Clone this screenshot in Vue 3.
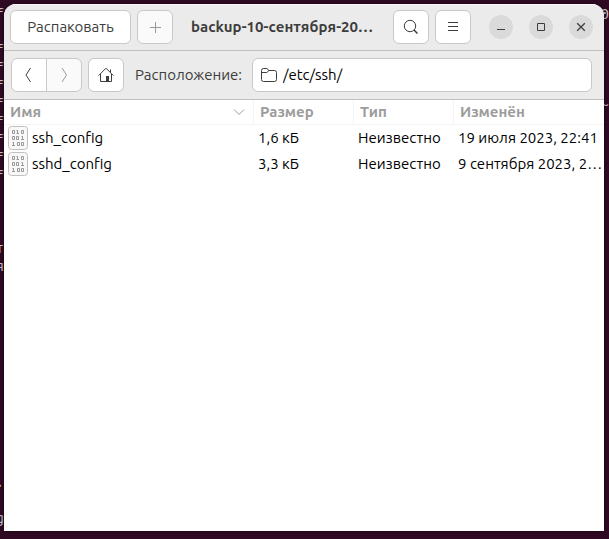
<script setup>
import { ref } from 'vue'

const path = ref('/etc/ssh/')
const files = [
  { name: 'ssh_config', size: '1,6 кБ', type: 'Неизвестно', modified: '19 июля 2023, 22:41' },
  { name: 'sshd_config', size: '3,3 кБ', type: 'Неизвестно', modified: '9 сентября 2023, 22:41' },
]
const leftEdge = ['f', '', 'f', 'f', 'f', 'f', 'f', 'f', 'f', 'f', '', '', '', 'т', 'я', '', '', '', '', '', '', '', '', '', '', '', '.', '', 'g'].join('\n')
const rightEdge = ['0', '', '', '', '', '~'].join('\n')
</script>

<template>
  <div class="desktop">
    <pre class="terminal" aria-hidden="true">{{ leftEdge }}</pre>
    <main class="window">
      <header class="titlebar">
        <button class="btn extract" type="button">Распаковать</button>
        <button class="btn square muted" type="button" aria-label="Добавить файлы" disabled>
          <svg width="16" height="16" viewBox="0 0 16 16"><path d="M8.5 3v11M3 8.5h11" /></svg>
        </button>
        <h1 class="title">backup-10-сентября-2023.tar.gz</h1>
        <button class="btn square" type="button" aria-label="Найти">
          <svg width="16" height="16" viewBox="0 0 16 16"><circle cx="7" cy="7" r="5.7" /><path d="M11 11l3.5 3.5" stroke-width="1.5" /></svg>
        </button>
        <button class="btn square" type="button" aria-label="Меню">
          <svg width="16" height="16" viewBox="0 0 16 16"><path d="M3 3.5h10M3 7.5h10M3 11.5h10" /></svg>
        </button>
        <div class="controls">
          <button type="button" aria-label="Свернуть">
            <svg width="16" height="16" viewBox="0 0 16 16"><path d="M4 10.5h8" /></svg>
          </button>
          <button type="button" aria-label="Развернуть">
            <svg width="16" height="16" viewBox="0 0 16 16"><path d="M4.5 4.5h7v7h-7z" /></svg>
          </button>
          <button type="button" aria-label="Закрыть">
            <svg width="16" height="16" viewBox="0 0 16 16"><path d="M4.2 4.2l7.6 7.6M11.8 4.2l-7.6 7.6" stroke-width="1.3" /></svg>
          </button>
        </div>
      </header>

      <nav class="toolbar">
        <div class="history">
          <button class="btn square" type="button" aria-label="Назад">
            <svg width="16" height="16" viewBox="0 0 16 16"><path d="M9.500 1L5 8l4.500 7" /></svg>
          </button>
          <button class="btn square muted" type="button" aria-label="Вперёд" disabled>
            <svg width="16" height="16" viewBox="0 0 16 16"><path d="M6 1l4.500 7L6 15" /></svg>
          </button>
        </div>
        <button class="btn square" type="button" aria-label="Домой">
          <svg width="16" height="16" viewBox="0 0 16 16">
            <path d="M.6 8.600L8 1.200l7.400 7.400M2.500 7v7.500h11V7M12.500 5.500V2.500" />
            <path class="solid" d="M8 14.500V9h3v5.500z" />
          </svg>
        </button>
        <label class="label" for="location">Расположение:</label>
        <div class="entry">
          <svg width="16" height="16" viewBox="0 0 16 16">
            <path d="M.5 12.500v-9a2 2 0 0 1 2-2h3.300L8 3.500h5.500a2 2 0 0 1 2 2v7a2 2 0 0 1-2 2h-11a2 2 0 0 1-2-2zM.5 5.500h5.300L8 3.500" />
          </svg>
          <input id="location" v-model="path" type="text" />
        </div>
      </nav>

      <table class="files">
        <colgroup>
          <col class="col-name" />
          <col class="col-mid" />
          <col class="col-mid" />
          <col />
        </colgroup>
        <thead>
          <tr>
            <th scope="col" aria-sort="ascending">
              <div class="sorted">
                Имя
                <svg width="12" height="12" viewBox="0 0 12 12"><path d="M1 3.500l5 5 5-5" /></svg>
              </div>
            </th>
            <th scope="col">Размер</th>
            <th scope="col">Тип</th>
            <th scope="col">Изменён</th>
          </tr>
        </thead>
        <tbody>
          <tr v-for="file in files" :key="file.name">
            <td>
              <div class="name">
                <svg class="file-icon" width="20" height="24" viewBox="0 0 20 24">
                  <rect x=".5" y=".5" width="19" height="23" rx="3" />
                  <path d="M4.500 4.500h2v3h-2zM9.500 4v4M8.500 4.500h1M8.500 7.500h2.500M13.500 4.500h2v3h-2z" />
                  <path d="M4.500 10.500h2v3h-2zM8.500 10.500h2v3h-2zM14.500 10v4M13.500 10.500h1M13 13.500h3" />
                  <path d="M5.500 16v4M4.500 16.500h1M4 19.500h3M9.500 16.500h2v3h-2zM13.500 16.500h2v3h-2z" />
                </svg>
                {{ file.name }}
              </div>
            </td>
            <td>{{ file.size }}</td>
            <td>{{ file.type }}</td>
            <td>{{ file.modified }}</td>
          </tr>
        </tbody>
      </table>
    </main>
    <pre class="terminal" aria-hidden="true">{{ rightEdge }}</pre>
  </div>
</template>

<style>
body {
  margin: 0;
  background: #300a24;
}
</style>

<style scoped>
* {
  box-sizing: border-box;
}

.desktop {
  display: grid;
  grid-template-columns: 4px minmax(0, 1fr) 5px;
  min-height: 100vh;
  padding: 4px 0 8px;
  overflow: hidden;
  background: #300a24;
  color: #3d3d3d;
  font: 15px/20px Ubuntu, "Noto Sans", sans-serif;
}

.terminal {
  display: flex;
  justify-content: flex-end;
  height: 0;
  margin: 0;
  padding-top: 1px;
  color: #d0c8cc;
  font: 15px/18px "Ubuntu Mono", "DejaVu Sans Mono", monospace;
}

.window {
  position: relative;
  overflow: hidden;
  border-radius: 12px 12px 0 0;
  background: #fff;
  box-shadow: 0 0 5px rgb(0 0 0 / 50%);
}

svg {
  flex: none;
  fill: none;
  stroke: currentColor;
}

.titlebar,
.toolbar {
  display: flex;
  align-items: center;
  gap: 6px;
  border-bottom: 1px solid #bfbfbf;
  background: #ebebeb;
}

.titlebar {
  height: 47px;
  padding: 0 11px 0 6px;
  box-shadow: inset 0 1px #f8f8f8;
}

.toolbar {
  height: 49px;
  padding: 0 12px 0 7px;
}

.btn {
  display: flex;
  flex: none;
  align-items: center;
  justify-content: center;
  height: 34px;
  padding: 0;
  border: 1px solid #c8c8c8;
  border-radius: 6px;
  background: #fff;
  color: #3d3d3d;
  font: inherit;
}

.extract {
  width: 121px;
}

.square {
  width: 36px;
}

.muted {
  background: #fafafa;
  color: #999;
}

.title {
  flex: 1;
  min-width: 0;
  margin: 0 10px 0 12px;
  overflow: hidden;
  font-size: 15px;
  font-weight: 700;
  text-overflow: ellipsis;
  white-space: nowrap;
}

.controls {
  display: flex;
  gap: 16px;
  margin-left: 12px;
}

.controls button {
  display: flex;
  align-items: center;
  justify-content: center;
  width: 24px;
  height: 24px;
  padding: 0;
  border: 0;
  border-radius: 50%;
  background: #dadada;
  color: #3d3d3d;
}

.history {
  display: flex;
}

.history .btn:first-child {
  border-radius: 6px 0 0 6px;
}

.history .btn:last-child {
  margin-left: -1px;
  border-radius: 0 6px 6px 0;
}

.toolbar .label {
  margin-left: 5px;
  white-space: nowrap;
}

.entry {
  display: flex;
  flex: 1;
  align-items: center;
  gap: 6px;
  min-width: 0;
  height: 34px;
  margin-left: 4px;
  padding: 0 8px;
  border: 1px solid #c8c8c8;
  border-radius: 6px;
  background: #fff;
}

.entry input {
  flex: 1;
  min-width: 0;
  padding: 0;
  border: 0;
  outline: 0;
  background: none;
  color: #000;
  font: inherit;
}

.files {
  width: 100%;
  border-collapse: separate;
  border-spacing: 0;
  table-layout: fixed;
  color: #000;
}

.col-name {
  width: 250px;
}

.col-mid {
  width: 100px;
}

.files th {
  height: 25px;
  padding: 0 6px;
  border-right: 1px solid #f5f5f5;
  border-bottom: 1px solid #f5f5f5;
  color: #9c9c9c;
  font-weight: 700;
  text-align: left;
}

.files th:last-child {
  border-right: 0;
}

.sorted {
  display: flex;
  align-items: center;
  justify-content: space-between;
  padding-right: 2px;
}

.files td {
  height: 26px;
  padding: 0 0 0 4px;
  overflow: hidden;
  text-overflow: ellipsis;
  white-space: nowrap;
}

.name {
  display: flex;
  align-items: center;
  gap: 4px;
}

.file-icon {
  color: #999;
}

.file-icon rect {
  fill: #f8f8f8;
  stroke: #c0c0c0;
}

.solid {
  fill: currentColor;
  stroke: none;
}
</style>
